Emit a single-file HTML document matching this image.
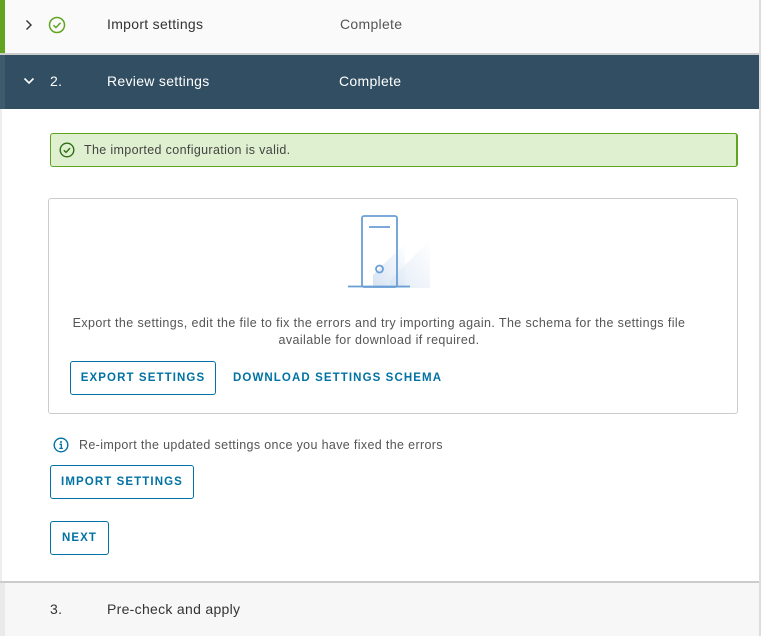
<!DOCTYPE html>
<html><head><style>
*{margin:0;padding:0;box-sizing:border-box}
body{width:761px;height:636px;position:relative;overflow:hidden;background:#fff;font-family:"Liberation Sans",sans-serif;color:#565656}
.a{position:absolute;white-space:nowrap}
.h{font-size:14px;letter-spacing:0.3px}
.btn{position:absolute;border:1px solid #0072a3;border-radius:3px;color:#0072a3;font-weight:bold;font-size:11.5px;letter-spacing:1.1px;display:flex;align-items:center;justify-content:center;background:#fff}
</style></head><body>
<div class="a" style="left:0;top:0;width:759px;height:53px;background:#fafafa"></div>
<div class="a" style="left:0;top:0;width:5px;height:53px;background:#62a420"></div>
<div class="a" style="left:0;top:53px;width:759px;height:2px;background:#ccc"></div>
<svg class="a" style="left:24px;top:19px" width="10" height="12"><path d="M2.5 1.5l4.5 4.5-4.5 4.5" fill="none" stroke="#333" stroke-width="1.4"/></svg>
<svg class="a" style="left:48px;top:16px" width="18" height="18" viewBox="0 0 18 18"><circle cx="9" cy="9" r="7.5" fill="none" stroke="#62a420" stroke-width="1.5"/><path d="M5.5 9.2l2.4 2.4 4.6-4.8" fill="none" stroke="#62a420" stroke-width="1.5"/></svg>
<div class="a h" style="left:107px;top:16px;color:#333">Import settings</div>
<div class="a h" style="left:340px;top:16px;color:#555">Complete</div>
<div class="a" style="left:0;top:55px;width:759px;height:54px;background:#314e62"></div>
<div class="a" style="left:0;top:55px;width:5px;height:54px;background:#3e5a6d"></div>
<svg class="a" style="left:23px;top:76px" width="12" height="10"><path d="M1.5 2.5l4.5 4.5 4.5-4.5" fill="none" stroke="#fff" stroke-width="1.6"/></svg>
<div class="a h" style="left:50px;top:73px;color:#fff">2.</div>
<div class="a h" style="left:107px;top:73px;color:#fff">Review settings</div>
<div class="a h" style="left:339px;top:73px;color:#fff">Complete</div>
<div class="a" style="left:759px;top:0;width:2px;height:636px;background:#ddd"></div>
<div class="a" style="left:0;top:109px;width:2px;height:473px;background:#eee"></div>
<div class="a" style="left:50px;top:133px;width:688px;height:34px;background:#dff0d0;border:1px solid #62a420;border-right-width:2px;border-radius:3px"></div>
<svg class="a" style="left:59px;top:142px" width="16" height="16" viewBox="0 0 16 16"><circle cx="8" cy="8" r="6.8" fill="none" stroke="#2f6f14" stroke-width="1.4"/><path d="M4.8 8.2l2.2 2.2 4-4.3" fill="none" stroke="#2f6f14" stroke-width="1.4"/></svg>
<div class="a" style="left:84px;top:143px;font-size:12.5px;letter-spacing:0.35px;color:#444">The imported configuration is valid.</div>
<div class="a" style="left:48px;top:198px;width:690px;height:216px;border:1px solid #ccc;border-radius:3px"></div>
<svg class="a" style="left:340px;top:210px" width="100" height="80" viewBox="0 0 100 80">
<defs><linearGradient id="g" x1="0" y1="1" x2="1" y2="0"><stop offset="0" stop-color="#d6e3f3"/><stop offset="1" stop-color="#fff"/></linearGradient></defs>
<polygon points="33,65 65,33 65,78 33,78" fill="url(#g)"/>
<polygon points="50,70 90,30 90,78 50,78" fill="url(#g)" opacity="0.7"/>
<rect x="22" y="6" width="35" height="71" rx="2" fill="none" stroke="#6a9fd6" stroke-width="1.8"/>
<line x1="29" y1="17" x2="50" y2="17" stroke="#6a9fd6" stroke-width="1.8"/>
<circle cx="39.5" cy="59" r="3.5" fill="none" stroke="#6a9fd6" stroke-width="1.8"/>
<line x1="8" y1="76.5" x2="70" y2="76.5" stroke="#6a9fd6" stroke-width="1.8"/>
</svg>
<div class="a" style="left:48px;width:662px;top:315px;text-align:center;font-size:12.5px;line-height:17px;color:#555;letter-spacing:0.4px">Export the settings, edit the file to fix the errors and try importing again. The schema for the settings file<br>available for download if required.</div>
<div class="btn" style="left:70px;top:361px;width:146px;height:34px">EXPORT SETTINGS</div>
<div class="a" style="left:233px;top:372px;font-size:11.5px;font-weight:bold;letter-spacing:1.1px;color:#0072a3">DOWNLOAD SETTINGS SCHEMA</div>
<svg class="a" style="left:53px;top:437px" width="16" height="16" viewBox="0 0 16 16"><circle cx="8" cy="8" r="6.8" fill="none" stroke="#0072a3" stroke-width="1.4"/><circle cx="8" cy="5" r="1" fill="#0072a3"/><path d="M6.5 7.3h1.8v4M6.3 11.4h3.6" fill="none" stroke="#0072a3" stroke-width="1.3"/></svg>
<div class="a" style="left:79px;top:438px;font-size:12.5px;letter-spacing:0.35px;color:#555">Re-import the updated settings once you have fixed the errors</div>
<div class="btn" style="left:50px;top:465px;width:144px;height:34px">IMPORT SETTINGS</div>
<div class="btn" style="left:50px;top:521px;width:59px;height:34px">NEXT</div>
<div class="a" style="left:0;top:581px;width:759px;height:2px;background:#ccc"></div>
<div class="a" style="left:0;top:583px;width:759px;height:53px;background:#f7f7f7"></div>
<div class="a" style="left:0;top:583px;width:5px;height:53px;background:#eaeaea"></div>
<div class="a h" style="left:50px;top:601px;color:#333">3.</div>
<div class="a h" style="left:107px;top:601px;color:#333">Pre-check and apply</div>
</body></html>
